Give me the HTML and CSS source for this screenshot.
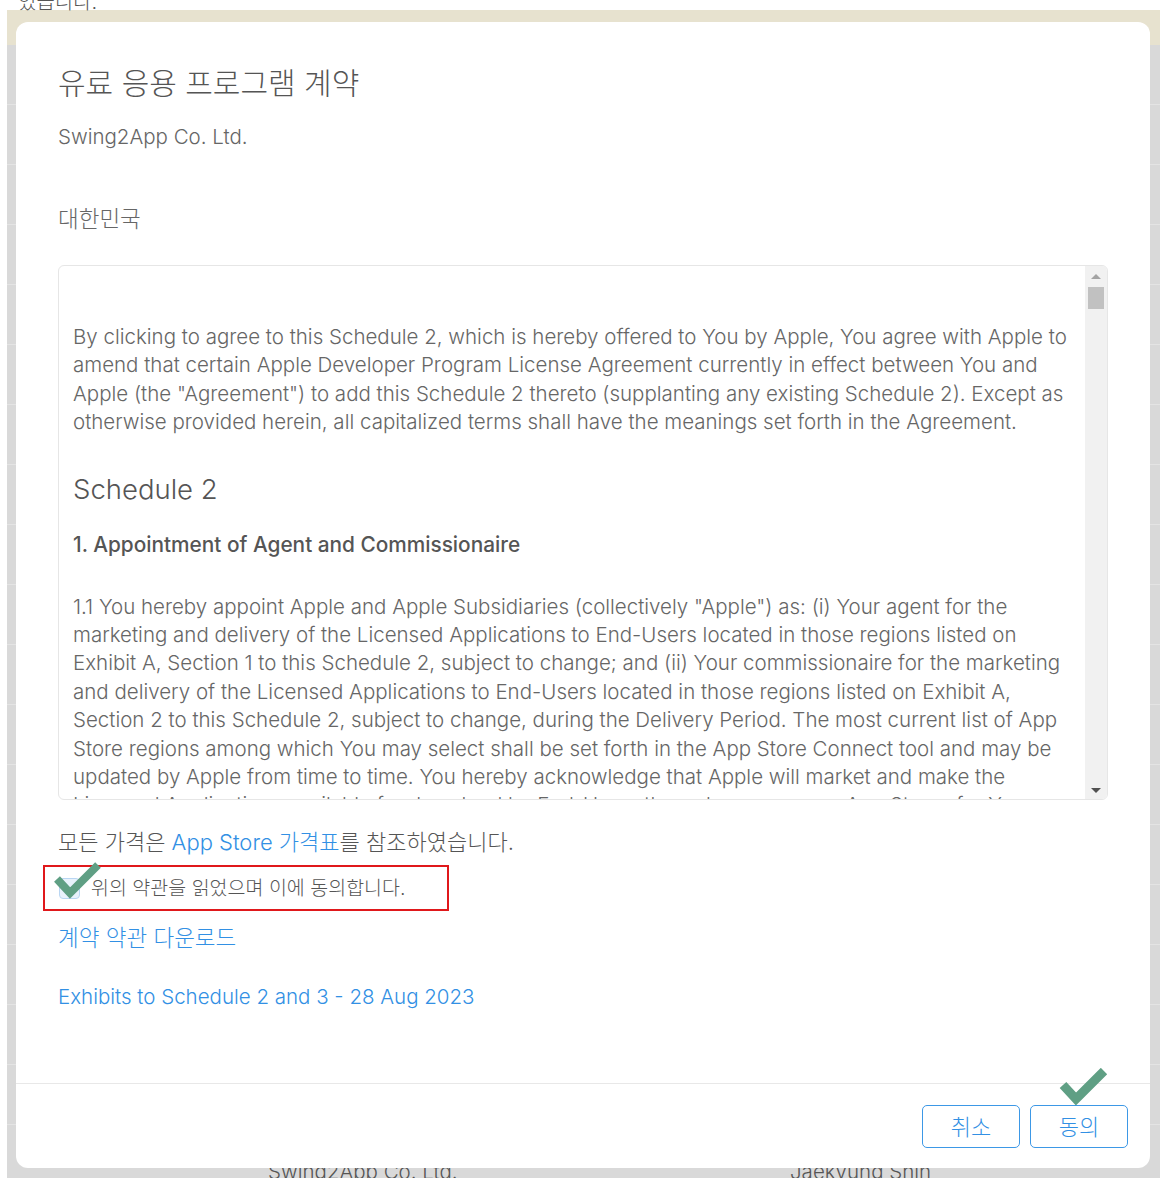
FILE: index.html
```html
<!DOCTYPE html>
<html lang="ko">
<head>
<meta charset="utf-8">
<title>유료 응용 프로그램 계약</title>
<link rel="stylesheet" href="styles.css">
</head>
<body>
<div class="screen">
  <div class="top-text"><span>있습니다.</span></div>
  <div class="app">
    <div class="app-header"></div>
    <div class="app-rows">
      <div class="app-row"></div>
      <div class="app-row"></div>
      <div class="app-row"></div>
      <div class="app-row"></div>
      <div class="app-row"></div>
      <div class="app-row"></div>
      <div class="app-row"></div>
      <div class="app-row"></div>
      <div class="app-row"></div>
      <div class="app-row"></div>
      <div class="app-row"></div>
      <div class="app-row"></div>
      <div class="app-row"></div>
      <div class="app-row"></div>
      <div class="app-row"></div>
      <div class="app-row"></div>
      <div class="app-row"></div>
      <div class="app-row"></div>
      <div class="app-row last-row">
        <span class="cell-company">Swing2App Co. Ltd.</span>
        <span class="cell-name">Jaekyung Shin</span>
      </div>
    </div>

    <div class="modal">
      <div class="modal-body">
        <h1 class="modal-title">유료 응용 프로그램 계약</h1>
        <p class="company">Swing2App Co. Ltd.</p>
        <p class="country">대한민국</p>

        <div class="terms-box">
          <div class="terms-content">
            <p class="terms-p">By clicking to agree to this Schedule 2, which is hereby offered to You by Apple, You agree with Apple to amend that certain Apple Developer Program License Agreement currently in effect between You and Apple (the "Agreement") to add this Schedule 2 thereto (supplanting any existing Schedule 2). Except as otherwise provided herein, all capitalized terms shall have the meanings set forth in the Agreement.</p>
            <h2 class="terms-h2">Schedule 2</h2>
            <h3 class="terms-h3">1. Appointment of Agent and Commissionaire</h3>
            <p class="terms-p terms-p2">1.1 You hereby appoint Apple and Apple Subsidiaries (collectively "Apple") as: (i) Your agent for the marketing and delivery of the Licensed Applications to End-Users located in those regions listed on Exhibit A, Section 1 to this Schedule 2, subject to change; and (ii) Your commissionaire for the marketing and delivery of the Licensed Applications to End-Users located in those regions listed on Exhibit A, Section 2 to this Schedule 2, subject to change, during the Delivery Period. The most current list of App Store regions among which You may select shall be set forth in the App Store Connect tool and may be updated by Apple from time to time. You hereby acknowledge that Apple will market and make the Licensed Applications available for download by End-Users through one or more App Stores for You.</p>
          </div>
          <div class="scrollbar">
            <span class="sb-arrow sb-up"></span>
            <span class="sb-thumb"></span>
            <span class="sb-spacer"></span>
            <span class="sb-arrow sb-down"></span>
          </div>
        </div>

        <p class="price-note">모든 가격은 <a class="link" href="#">App Store 가격표</a>를 참조하였습니다.</p>

        <label class="agree-row">
          <span class="checkbox"></span>
          <span class="agree-text">위의 약관을 읽었으며 이에 동의합니다.</span>
          <svg class="check-mark check-mark-box" viewBox="0 0 50 40" width="50" height="40"><path d="M4 18 L17 32 L45 4" fill="none" stroke="#5f9f84" stroke-width="8"/></svg>
        </label>

        <a class="link download" href="#">계약 약관 다운로드</a>
        <a class="link exhibits" href="#">Exhibits to Schedule 2 and 3 - 28 Aug 2023</a>
      </div>

      <div class="modal-footer">
        <button class="btn" type="button">취소</button>
        <button class="btn btn-agree" type="button">동의
          <svg class="check-mark check-mark-btn" viewBox="0 0 50 40" width="50" height="40"><path d="M4 17 L17 31 L45 3" fill="none" stroke="#5f9f84" stroke-width="9"/></svg>
        </button>
      </div>
    </div>
  </div>
</div>
</body>
</html>
```

FILE: styles.css
```css
* {
  box-sizing: border-box;
}

html, body {
  margin: 0;
  padding: 0;
  background: #ffffff;
}

body {
  font-family: Inter, "Noto Sans CJK KR", sans-serif;
  color: #555;
}

.screen {
  width: 1162px;
  height: 1181px;
  padding-left: 7px;
  padding-right: 2px;
  overflow: hidden;
}

.top-text {
  display: flow-root;
  height: 10px;
  position: relative;
  z-index: 2;
}

.top-text span {
  display: block;
  margin-top: -11px;
  margin-left: 11px;
  font-size: 20px;
  line-height: 26px;
  color: #555;
  font-weight: 300;
}

.app {
  position: relative;
  height: 1168px;
  background: #d9d9d9;
  overflow: hidden;
}

.app-header {
  height: 35px;
  background: #e7e2cf;
}

.app-rows {
  display: flex;
  flex-direction: column;
}

.app-row {
  height: 60px;
  border-bottom: 1px solid #e4e4e4;
}

.last-row {
  position: relative;
  height: 60px;
  border-bottom: none;
}

.cell-company,
.cell-name {
  position: absolute;
  top: 33px;
  font-size: 20.5px;
  line-height: 28px;
  color: #555;
  font-weight: 300;
}

.cell-company {
  left: 261px;
}

.cell-name {
  left: 783px;
}

/* Modal */
.modal {
  position: absolute;
  left: 9px;
  top: 12px;
  width: 1134px;
  height: 1146px;
  background: #ffffff;
  border-radius: 12px;
  display: flex;
  flex-direction: column;
}

.modal-body {
  flex: 1;
  padding: 43px 42px 0 42px;
  display: flex;
  flex-direction: column;
  align-items: flex-start;
}

.modal-title {
  margin: 0;
  font-size: 30px;
  line-height: 36px;
  font-weight: 300;
  color: #555;
}

.company {
  margin: 22px 0 0;
  font-size: 20.5px;
  line-height: 28px;
  color: #666;
  font-weight: 300;
}

.country {
  margin: 54px 0 0;
  font-size: 22.5px;
  line-height: 28px;
  color: #666;
  font-weight: 300;
}

.terms-box {
  margin-top: 32px;
  width: 1050px;
  height: 535px;
  border: 1px solid #e6e6e6;
  border-radius: 6px;
  display: flex;
  overflow: hidden;
}

.terms-content {
  flex: 1;
  padding: 57px 14px 0 14px;
  overflow: hidden;
}

.terms-p {
  margin: 0;
  font-size: 20.5px;
  line-height: 28.4px;
  color: #666;
  font-weight: 300;
}

.terms-h2 {
  margin: 35px 0 0;
  font-size: 27.5px;
  line-height: 34px;
  font-weight: 300;
  color: #555;
}

.terms-h3 {
  margin: 25px 0 0;
  font-size: 20.8px;
  line-height: 28px;
  font-weight: 500;
  color: #555;
}

.terms-p2 {
  margin-top: 34px;
}

.scrollbar {
  width: 22px;
  background: #f1f1f1;
  display: flex;
  flex-direction: column;
  align-items: center;
  padding: 8px 0 6px;
}

.sb-arrow {
  width: 0;
  height: 0;
  border-left: 5px solid transparent;
  border-right: 5px solid transparent;
}

.sb-up {
  border-bottom: 5px solid #a3a3a3;
}

.sb-down {
  border-top: 5px solid #505050;
}

.sb-thumb {
  margin-top: 8px;
  width: 16px;
  height: 22px;
  background: #c1c1c1;
}

.sb-spacer {
  flex: 1;
}

.link {
  color: #3290e4;
  text-decoration: none;
}

.price-note {
  margin: 28px 0 0;
  font-size: 22px;
  line-height: 28px;
  color: #555;
  font-weight: 300;
}

.agree-row {
  position: relative;
  margin: 9px 0 0 -15px;
  width: 406px;
  height: 46px;
  border: 2px solid #e0181b;
  display: flex;
  align-items: center;
  padding-left: 14px;
  gap: 11px;
}

.checkbox {
  width: 21px;
  height: 21px;
  border: 1px solid #b9d6f3;
  border-radius: 4px;
  background: #e8f2fc;
}

.agree-text {
  font-size: 19.5px;
  line-height: 24px;
  color: #555;
  font-weight: 300;
}

.check-mark {
  position: absolute;
  pointer-events: none;
}

.check-mark-box {
  left: 8px;
  top: -6px;
}

.download {
  margin-top: 13px;
  font-size: 22.5px;
  line-height: 28px;
  font-weight: 300;
}

.exhibits {
  margin-top: 31px;
  font-size: 20.5px;
  line-height: 28px;
  font-weight: 300;
}

.modal-footer {
  border-top: 1px solid #e8e8e8;
  padding: 21px 22px 20px 0;
  display: flex;
  justify-content: flex-end;
  gap: 10px;
}

.btn {
  position: relative;
  width: 98px;
  height: 43px;
  background: #ffffff;
  border: 1.5px solid #3d98e6;
  border-radius: 5px;
  color: #3290e4;
  font-family: Inter, "Noto Sans CJK KR", sans-serif;
  font-size: 22px;
  line-height: 28px;
  font-weight: 300;
  padding: 0;
  cursor: pointer;
}

.check-mark-btn {
  left: 28px;
  top: -38px;
}
```
